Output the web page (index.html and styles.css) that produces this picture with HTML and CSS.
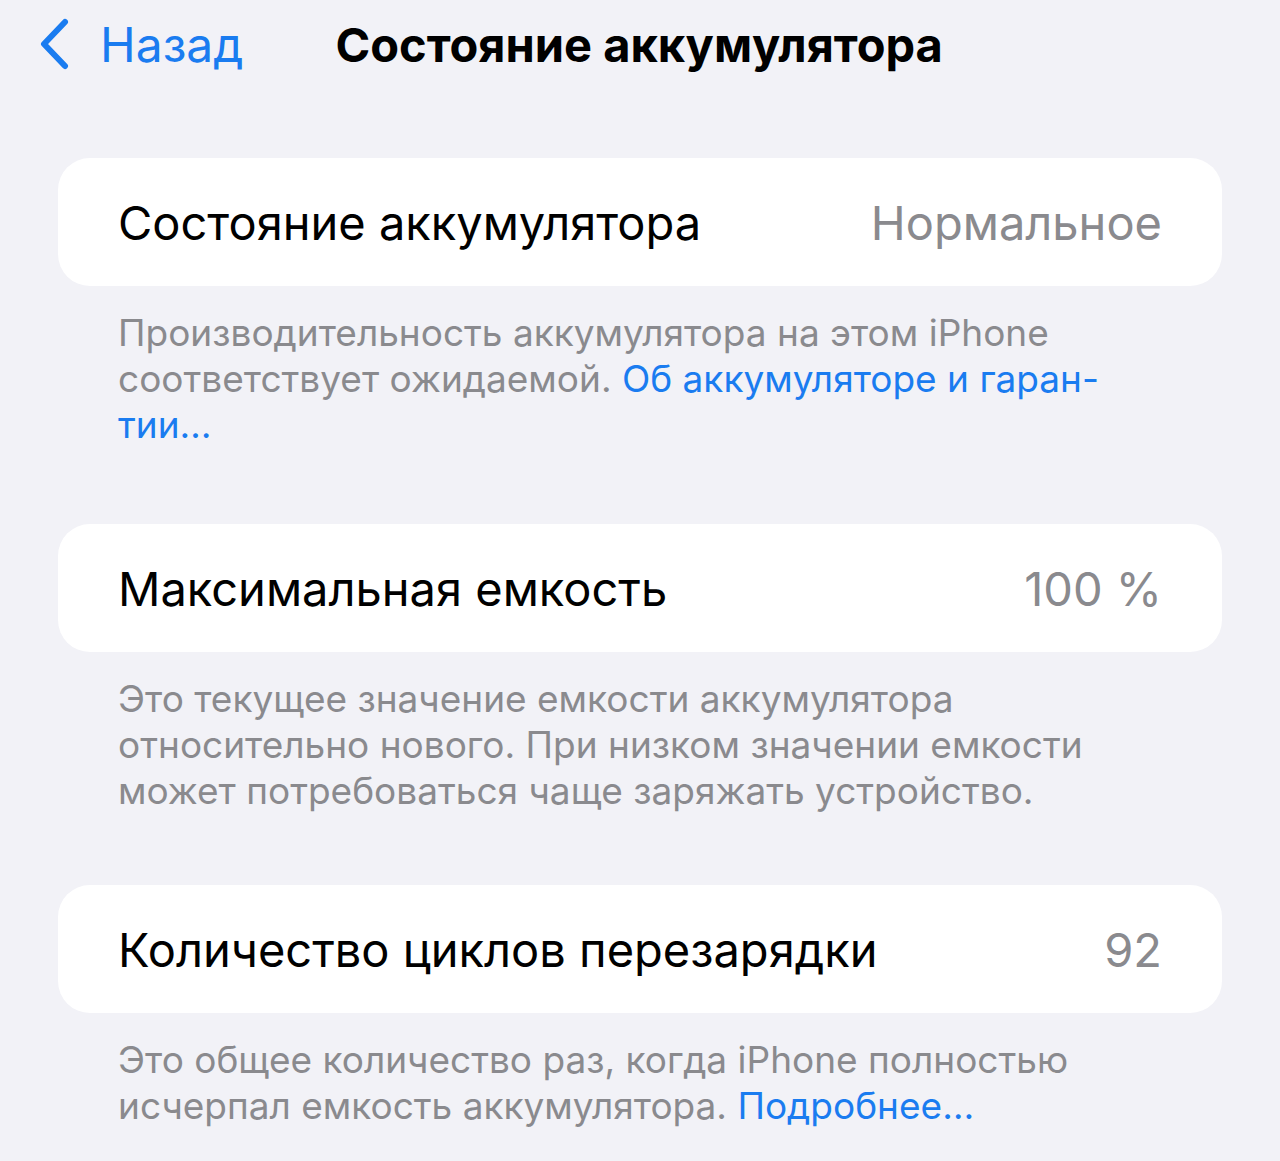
FILE: index.html
```html
<!DOCTYPE html>
<html lang="ru">
<head>
<meta charset="utf-8">
<link rel="stylesheet" href="styles.css">
</head>
<body>
<div class="screen">
  <header class="nav">
    <a class="back">
      <svg class="chev" viewBox="0 0 32 52" width="32" height="52"><path d="M27 4 L6 26 L27 48" fill="none" stroke="currentColor" stroke-width="6" stroke-linecap="round" stroke-linejoin="round"/></svg>
      <span class="back-label">Назад</span>
    </a>
    <h1 class="title">Состояние аккумулятора</h1>
  </header>

  <section class="group first">
    <div class="card">
      <span class="label">Состояние аккумулятора</span>
      <span class="value">Нормальное</span>
    </div>
    <p class="footer">Производительность аккумулятора на этом iPhone<br>соответствует ожидаемой. <span class="link">Об аккумуляторе и гаран-<br>тии…</span></p>
  </section>

  <section class="group">
    <div class="card">
      <span class="label">Максимальная емкость</span>
      <span class="value">100 %</span>
    </div>
    <p class="footer">Это текущее значение емкости аккумулятора<br>относительно нового. При низком значении емкости<br>может потребоваться чаще заряжать устройство.</p>
  </section>

  <section class="group">
    <div class="card">
      <span class="label">Количество циклов перезарядки</span>
      <span class="value">92</span>
    </div>
    <p class="footer">Это общее количество раз, когда iPhone полностью<br>исчерпал емкость аккумулятора. <span class="link">Подробнее…</span></p>
  </section>
</div>
</body>
</html>
```

FILE: styles.css
```css
html, body {
  margin: 0;
  padding: 0;
  background: #f2f2f7;
}
body {
  font-family: Inter, "Noto Sans", "Liberation Sans", sans-serif;
  color: #000;
  height: 1161px;
  overflow: hidden;
}
.screen {
  width: 1280px;
  padding: 0 58px;
  box-sizing: border-box;
}
.nav {
  height: 88px;
  display: flex;
  align-items: center;
}
.back {
  display: flex;
  align-items: center;
  gap: 30px;
  color: #1a7cf0;
  margin-left: -20px;
}
.chev {
  display: block;
}
.back-label {
  font-size: 48px;
  font-weight: 400;
}
.title {
  margin: 0 0 0 92px;
  font-size: 47px;
  font-weight: 700;
  white-space: nowrap;
}
.group {
  margin-top: 71px;
}
.group.first {
  margin-top: 70px;
}
.group.first .footer {
  padding-bottom: 5px;
}
.card {
  background: #fff;
  border-radius: 32px;
  height: 128px;
  display: flex;
  align-items: center;
  justify-content: space-between;
  padding: 0 60px;
  font-size: 47px;
}
.value {
  color: #8a8a8e;
}
.footer {
  margin: 24px 0 0;
  padding: 0 60px;
  font-size: 37px;
  line-height: 46px;
  color: #8a8a8e;
  white-space: nowrap;
}
.link {
  color: #1a7cf0;
}
```
